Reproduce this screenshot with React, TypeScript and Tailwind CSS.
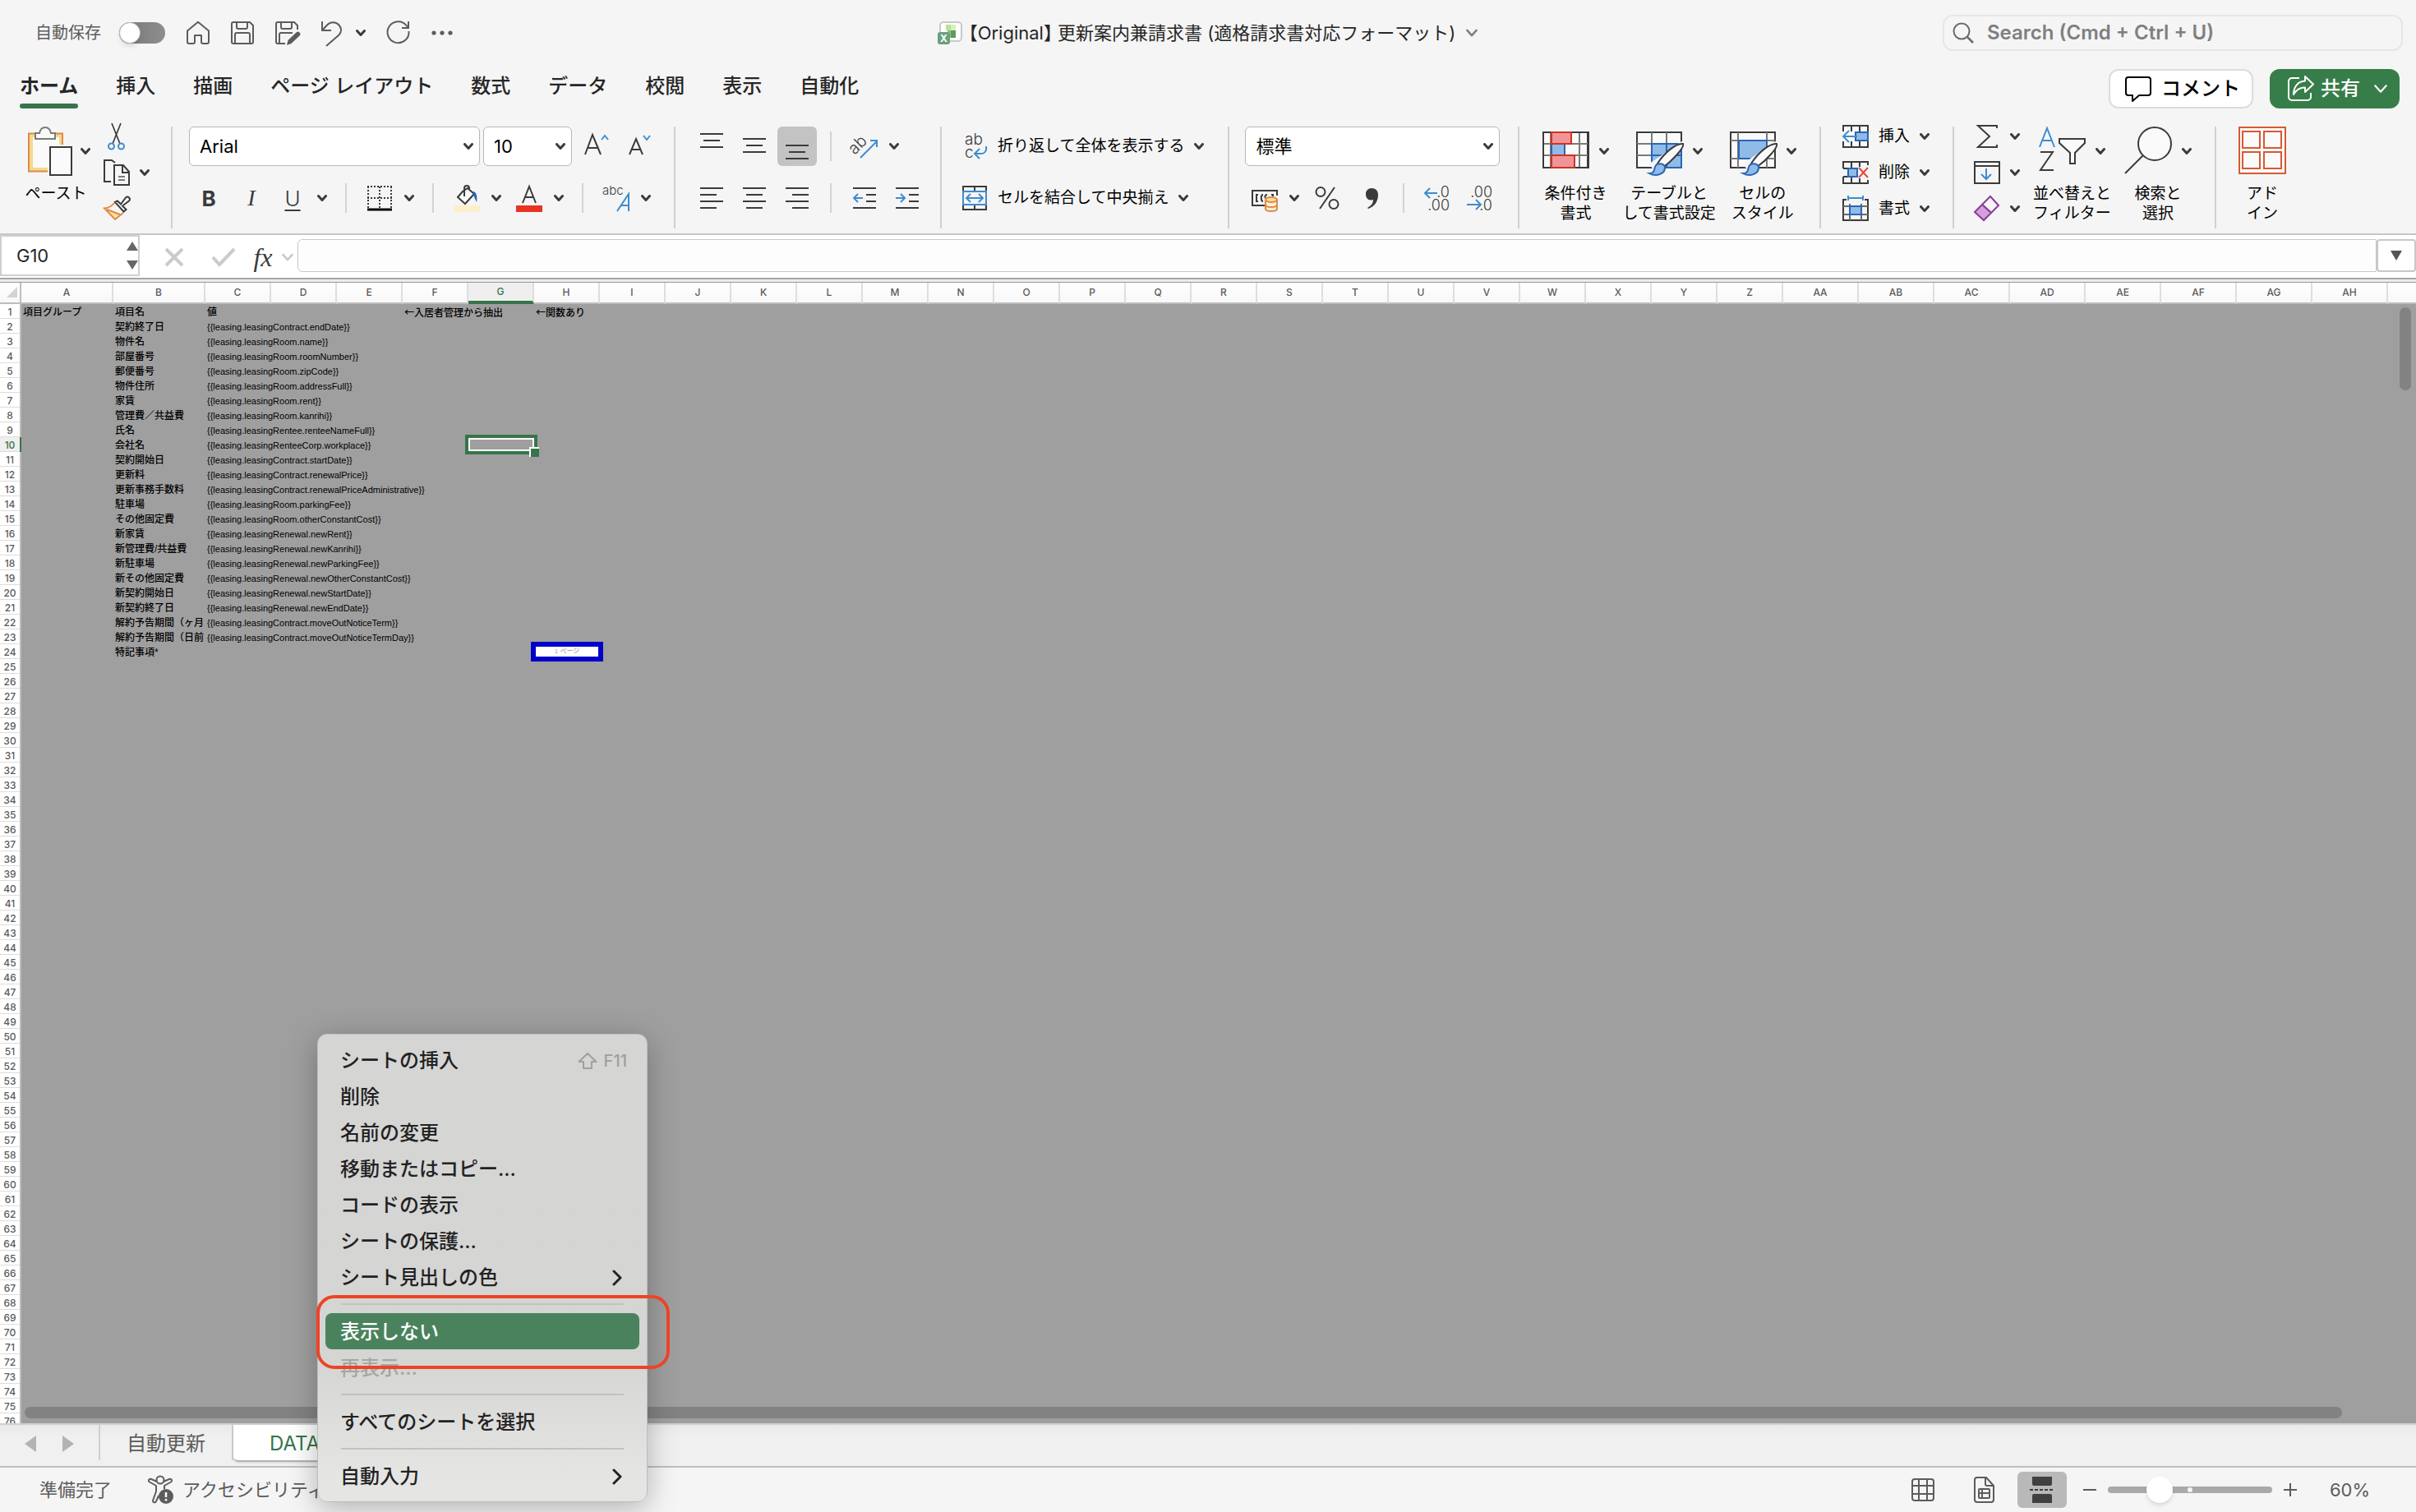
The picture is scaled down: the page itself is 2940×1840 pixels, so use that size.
import type { ReactNode } from "react";

const TABS = ["ホーム", "挿入", "描画", "ページ レイアウト", "数式", "データ", "校閲", "表示", "自動化"];

const COLUMNS = [
  ..."ABCDEFGHIJKLMNOPQRSTUVWXYZ".split(""),
  ..."ABCDEFGH".split("").map((c) => "A" + c),
];

const ROW_COUNT = 76;

// column B / column C, starting on row 1
const DATA: [string, string][] = [
  ["項目名", "値"],
  ["契約終了日", "{{leasing.leasingContract.endDate}}"],
  ["物件名", "{{leasing.leasingRoom.name}}"],
  ["部屋番号", "{{leasing.leasingRoom.roomNumber}}"],
  ["郵便番号", "{{leasing.leasingRoom.zipCode}}"],
  ["物件住所", "{{leasing.leasingRoom.addressFull}}"],
  ["家賃", "{{leasing.leasingRoom.rent}}"],
  ["管理費／共益費", "{{leasing.leasingRoom.kanrihi}}"],
  ["氏名", "{{leasing.leasingRentee.renteeNameFull}}"],
  ["会社名", "{{leasing.leasingRenteeCorp.workplace}}"],
  ["契約開始日", "{{leasing.leasingContract.startDate}}"],
  ["更新料", "{{leasing.leasingContract.renewalPrice}}"],
  ["更新事務手数料", "{{leasing.leasingContract.renewalPriceAdministrative}}"],
  ["駐車場", "{{leasing.leasingRoom.parkingFee}}"],
  ["その他固定費", "{{leasing.leasingRoom.otherConstantCost}}"],
  ["新家賃", "{{leasing.leasingRenewal.newRent}}"],
  ["新管理費/共益費", "{{leasing.leasingRenewal.newKanrihi}}"],
  ["新駐車場", "{{leasing.leasingRenewal.newParkingFee}}"],
  ["新その他固定費", "{{leasing.leasingRenewal.newOtherConstantCost}}"],
  ["新契約開始日", "{{leasing.leasingRenewal.newStartDate}}"],
  ["新契約終了日", "{{leasing.leasingRenewal.newEndDate}}"],
  ["解約予告期間（ヶ月", "{{leasing.leasingContract.moveOutNoticeTerm}}"],
  ["解約予告期間（日前", "{{leasing.leasingContract.moveOutNoticeTermDay}}"],
  ["特記事項*", ""],
];

const DARK = "#3b3b3b";
const BLUE = "#3f8ccf";

function Chevron({ className = "w-3 h-2 text-[#3b3b3b]", width = 3 }: { className?: string; width?: number }) {
  return (
    <svg viewBox="0 0 12 8" className={`shrink-0 ${className}`} fill="none" stroke="currentColor" strokeWidth={width} strokeLinecap="round" strokeLinejoin="round">
      <path d="M1.5 1.5 6 6.5l4.5-5" />
    </svg>
  );
}

function Icon({ children, size = 32, color = DARK, width = 2 }: { children: ReactNode; size?: number; color?: string; width?: number }) {
  return (
    <svg width={size} height={size} viewBox={`0 0 ${size} ${size}`} fill="none" stroke={color} strokeWidth={width} className="shrink-0 overflow-visible">
      {children}
    </svg>
  );
}

// icon with an optional drop-down arrow beside it
function Tool({ label, menu = false, children }: { label: string; menu?: boolean; children: ReactNode }) {
  return (
    <button aria-label={label} className="flex items-center gap-3.5">
      {children}
      {menu && <Chevron />}
    </button>
  );
}

function SmallTool({ label, text, menu = true, children }: { label: string; text?: string; menu?: boolean; children: ReactNode }) {
  return (
    <button aria-label={label} className="flex h-11 items-center gap-3">
      {children}
      {text && <span>{text}</span>}
      {menu && <Chevron />}
    </button>
  );
}

function BigTool({ lines, menu = true, children }: { lines: string[]; menu?: boolean; children: ReactNode }) {
  return (
    <button className="flex flex-col items-center gap-2.5 pt-2.5">
      <span className="flex items-center gap-2.5">
        {children}
        {menu && <Chevron />}
      </span>
      <span className="leading-6">
        {lines.map((line) => (
          <span key={line} className="block">{line}</span>
        ))}
      </span>
    </button>
  );
}

function Divider() {
  return <div className="mt-2.5 h-31 w-0.5 shrink-0 bg-[#d0d0d0]" />;
}

function ThinDivider({ className = "ml-[22px] mr-6" }: { className?: string }) {
  return <div className={`h-9 w-0.5 shrink-0 bg-[#d3d3d3] ${className}`} />;
}

function Combo({ label, value, className }: { label: string; value: string; className: string }) {
  return (
    <div className={`relative h-12 ${className}`}>
      <select aria-label={label} defaultValue={value} className="size-full appearance-none rounded-md border border-[#b8b8b8] bg-white pl-3 text-[22px] text-black">
        <option>{value}</option>
      </select>
      <span className="pointer-events-none absolute inset-y-0 right-2 flex items-center">
        <Chevron />
      </span>
    </div>
  );
}

function AlignButton({ label, d, active = false }: { label: string; d: string; active?: boolean }) {
  return (
    <button aria-label={label} className={`flex size-12 items-center justify-center rounded-md ${active ? "bg-[#c3c3c3]" : ""}`}>
      <Icon><path d={d} /></Icon>
    </button>
  );
}

function TitleBar() {
  return (
    <div className="grid h-20 grid-cols-[1fr_auto_1fr] items-center">
      <div className="flex items-center gap-[26px] pl-[43px] text-[#5c5c5c]">
        <label className="flex items-center gap-[22px] text-xl">
          自動保存
          <input
            type="checkbox"
            role="switch"
            className="h-[26px] w-14 appearance-none rounded-full bg-gradient-to-r from-[#777] to-[#8e8e8e] before:block before:size-[26px] before:rounded-full before:border before:border-[#bbb] before:bg-white before:shadow-md"
          />
        </label>
        <button aria-label="Home">
          <Icon size={28} color="#5c5c5c"><path d="M1 11.500 14 .8 27 11.500V25a2 2 0 0 1-2 2h-5a2 2 0 0 1-2-2v-8h-8v8a2 2 0 0 1-2 2H3a2 2 0 0 1-2-2z" strokeLinejoin="round" /></Icon>
        </button>
        <button aria-label="Save">
          <Icon size={28} color="#5c5c5c"><path d="M3 1h20l4 4v20a2 2 0 0 1-2 2H3a2 2 0 0 1-2-2V3a2 2 0 0 1 2-2zM7 1v6a2 2 0 0 0 2 2h9a2 2 0 0 0 2-2V1M5 27V16a2 2 0 0 1 2-2h14a2 2 0 0 1 2 2v11" /></Icon>
        </button>
        <button aria-label="Save as">
          <Icon size={28} color="#5c5c5c">
            <path d="M12 27H3a2 2 0 0 1-2-2V3a2 2 0 0 1 2-2h20l4 4v5M7 1v6a2 2 0 0 0 2 2h9a2 2 0 0 0 2-2V1M5 27V16a2 2 0 0 1 2-2h14" />
            <path d="m14 29 1.500-6 10-9.500a2.600 2.600 0 0 1 4 4l-10 9.500z" fill="#5c5c5c" stroke="none" />
          </Icon>
        </button>
        <button aria-label="Undo" className="flex items-center gap-4">
          <Icon size={28} color="#5c5c5c"><path d="M3 0v11h11M3 11 9 4.500C13 0 20 .5 23.500 4.500s3 8.500 0 12L8 30" /></Icon>
          <Chevron />
        </button>
        <button aria-label="Redo">
          <Icon size={28} color="#5c5c5c"><path d="M26.500 12A13 13 0 1 1 24 5.500L26 8M26 0v8h-8" /></Icon>
        </button>
        <button aria-label="More">
          <Icon size={28} color="#5c5c5c"><g fill="#5c5c5c" stroke="none"><circle cx="3" cy="14" r="2.600" /><circle cx="13" cy="14" r="2.600" /><circle cx="23" cy="14" r="2.600" /></g></Icon>
        </button>
      </div>

      <button className="flex items-center gap-2 text-[22px] text-[#262626]">
        <svg width="30" height="30" viewBox="0 0 30 30">
          <rect x="3" y="2" width="26" height="23" rx="4" fill="#fdfdfd" stroke="#c9c9c9" strokeWidth="2" />
          <path d="M10 5h6v7h-6z" fill="#b9e29b" />
          <path d="M16 5h6v7h-6z" fill="#d2f2b8" />
          <path d="M16 12h6v9h-6z" fill="#5f9a5c" />
          <path d="M12 12h4v9h-4z" fill="#8cc47c" />
          <rect x="0" y="14" width="15" height="15" rx="3" fill="#6d9f7f" />
          <text x="7.500" y="26" fontSize="12" fontWeight="700" fill="#fff" textAnchor="middle">X</text>
        </svg>
        <span className="[font-feature-settings:'halt']">【Original】 更新案内兼請求書 (適格請求書対応フォーマット)</span>
        <Chevron className="ml-1 h-2.5 w-4 text-[#7d7d7d]" width={2} />
      </button>

      <div className="flex justify-end pr-4">
        <label className="flex h-11 w-[560px] items-center gap-4 rounded-xl border-2 border-[#e6e6e6] px-2.5">
          <Icon size={26} color="#6a6a6a"><circle cx="11" cy="11" r="9.500" /><path d="m18 18 7 7" strokeWidth="2.500" /></Icon>
          <input aria-label="Search" placeholder="Search (Cmd + Ctrl + U)" className="min-w-0 flex-1 bg-transparent text-2xl font-semibold outline-none placeholder:text-[#7f7f7f]" />
        </label>
      </div>
    </div>
  );
}

function TabRow() {
  return (
    <div className="flex h-15 items-start justify-between pl-6 pr-5 pt-1">
      <nav className="flex gap-[46px] text-2xl font-medium text-[#262626]">
        {TABS.map((tab, i) => (
          <button key={tab} className={`flex h-12 flex-col whitespace-nowrap ${i === 0 ? "font-bold" : ""}`}>
            <span className="leading-[42px]">{tab}</span>
            {i === 0 && <span className="h-1.5 w-full rounded-full bg-[#37744a]" />}
          </button>
        ))}
      </nav>
      <div className="flex gap-5 text-2xl font-medium">
        <button className="flex h-12 items-center gap-3 rounded-xl border-2 border-[#dcdcdc] bg-white pl-[18px] pr-3.5 text-black">
          <Icon color="#000"><path d="M4 2h24a3 3 0 0 1 3 3v16a3 3 0 0 1-3 3H17l-8 7v-7H4a3 3 0 0 1-3-3V5a3 3 0 0 1 3-3z" strokeLinejoin="round" /></Icon>
          コメント
        </button>
        <button className="flex h-12 items-center gap-2 rounded-xl bg-[#377d49] pl-[22px] pr-3.5 text-white">
          <Icon color="#fff"><path d="M14 3H5a4 4 0 0 0-4 4v19a4 4 0 0 0 4 4h19a4 4 0 0 0 4-4v-5M21 1l10 9.500L21 20v-5.500c-7 0-11 3-14 8.500 0-9 5-16 14-16.500z" strokeLinejoin="round" /></Icon>
          共有
          <Chevron className="ml-2 h-3 w-[18px]" width={1.4} />
        </button>
      </div>
    </div>
  );
}

function Ribbon() {
  return (
    <div className="flex h-36 items-start pl-[26px] pt-1 text-[19px] text-black">
      <button className="mr-4 flex flex-col gap-2.5 pt-2.5">
        <span className="flex items-center gap-2.5 pl-2">
          <svg width="54" height="60" viewBox="0 0 54 60" fill="none" strokeWidth="2">
            <path d="M3.500 10.500h37v42h-37z" fill="#fafafa" stroke="#f3d98f" strokeWidth="5" />
            <path d="M1 8.500h41v46H1z" stroke="#e08a45" />
            <path d="M9 15V8h5c1-5 3.500-7 7-7s6 2 7 7h5v7z" fill="#fafafa" stroke="#7b7b76" />
            <path d="M24 22h30v38H24z" fill="#f5f5f5" />
            <path d="M27 25h26v34H27z" fill="#fafafa" stroke={DARK} />
          </svg>
          <Chevron />
        </span>
        <span className="leading-6">ペースト</span>
      </button>
      <div className="mr-[26px] flex flex-col">
        <SmallTool label="切り取り" menu={false}>
          <Icon><path d="M10 0 20 25M21 0 11 25" strokeWidth="1.700" /><g stroke={BLUE}><circle cx="9.500" cy="28" r="3.500" /><circle cx="21.500" cy="28" r="3.500" /></g></Icon>
        </SmallTool>
        <SmallTool label="コピー">
          <Icon><path d="M9 27H1V1h9l4 3M13 7h11l7 8v16H13zM23 7v9h8" /><path d="M18 21h8M18 25h8" stroke="#7b7b76" /></Icon>
        </SmallTool>
        <SmallTool label="書式のコピー" menu={false}>
          <Icon><path d="m3 15 18 8-7 6z" fill="#f9e2a4" stroke="none" /><path d="M13 9C10 13 6 15 1 15.500L14 29l10-8M4 17l16 6" stroke="#e08a45" /><path d="m14 8 3-1.500 4 4 6-8a2.800 2.800 0 0 1 4 4l-8 6 4.500 4.500-3 2.500z" fill="#fafafa" /></Icon>
        </SmallTool>
      </div>
      <Divider />

      <div className="ml-5 mr-6 flex flex-col gap-[15px] pt-2.5">
        <div className="flex items-center">
          <Combo label="フォント" value="Arial" className="mr-1 w-[354px]" />
          <Combo label="フォント サイズ" value="10" className="mr-3.5 w-27" />
          <button aria-label="フォント サイズの拡大" className="mr-[22px]">
            <Icon><path d="M2 26 11 2l10 24M5 18h12" /><path d="m22 8 4-5 4 5" stroke={BLUE} /></Icon>
          </button>
          <button aria-label="フォント サイズの縮小">
            <Icon><path d="M2 26 10 7l8 19M5 20h10" /><path d="m19 3 4 5 4-5" stroke={BLUE} /></Icon>
          </button>
        </div>
        <div className="flex h-12 items-center pl-2">
          <button aria-label="太字" className="mr-5 w-8 text-[26px] font-bold text-[#3b3b3b]">B</button>
          <button aria-label="斜体" className="mr-[18px] w-8 font-['Liberation_Serif',serif] text-[28px] italic text-[#3b3b3b]">I</button>
          <button aria-label="下線" className="mr-[22px] flex items-center gap-3.5">
            <span className="w-8 text-[26px] font-light text-[#3b3b3b] underline decoration-2 underline-offset-4">U</span>
            <Chevron />
          </button>
          <ThinDivider className="mr-6" />
          <Tool label="罫線" menu>
            <Icon><path d="M2 2v26M16 2v26M30 2v26M1 2h30M1 16h30" strokeDasharray="2 2" /><path d="M1 30h30" stroke="#000" strokeWidth="3" /></Icon>
          </Tool>
          <ThinDivider />
          <Tool label="塗りつぶしの色" menu>
            <Icon><path d="M0 25h32v8H0z" fill="#fcf0cb" stroke="none" /><path d="M11 8 5 15l9 8 11-12-8-7zM13 14V4a3 3 0 0 1 6 0v2" fill="#fafafa" /><path d="M23 8c5 0 6 6 5 13-2-4-3-6-5-13z" fill="#2b66b5" stroke="none" /></Icon>
          </Tool>
          <span className="w-[18px]" />
          <Tool label="フォントの色" menu>
            <Icon><path d="M0 25h32v8H0z" fill="#e93323" stroke="none" /><path d="M8 22 16 2l8 20M11 15h10" /></Icon>
          </Tool>
          <ThinDivider />
          <Tool label="ふりがな" menu>
            <Icon><text x="-1" y="12" fontSize="15" fontWeight="300" fill={DARK} stroke="none">abc</text><path d="m17 32 14-21v21M22 25h9" stroke={BLUE} /></Icon>
          </Tool>
        </div>
      </div>
      <Divider />

      <div className="ml-5 mr-4 flex flex-col gap-[15px] pt-2.5">
        <div className="flex items-center">
          <div className="flex gap-1">
            <AlignButton label="上揃え" d="M2 1h28M6 9h20M2 17h28" />
            <AlignButton label="上下中央揃え" d="M2 7h28M6 15h20M2 23h28" />
            <AlignButton label="下揃え" d="M2 15h28M6 23h20M2 31h28" active />
          </div>
          <ThinDivider className="ml-4 mr-6" />
          <Tool label="方向" menu>
            <Icon><text x="1" y="24" fontSize="20" fontWeight="300" fill={DARK} stroke="none" transform="rotate(-45 6 22)">ab</text><path d="M11 30 31 10M23 9h8v8" stroke={BLUE} /></Icon>
          </Tool>
        </div>
        <div className="flex items-center">
          <div className="flex gap-1">
            <AlignButton label="左揃え" d="M2 4h28M2 12h20M2 20h28M2 28h20" />
            <AlignButton label="中央揃え" d="M2 4h28M6 12h20M2 20h28M6 28h20" />
            <AlignButton label="右揃え" d="M2 4h28M10 12h20M2 20h28M10 28h20" />
          </div>
          <ThinDivider className="mx-4" />
          <div className="flex gap-1">
            <button aria-label="インデントを減らす" className="flex size-12 items-center justify-center">
              <Icon><path d="M2 4h28M18 12h12M18 20h12M2 28h28" /><path d="M3 16h11M8 11l-5 5 5 5" stroke={BLUE} /></Icon>
            </button>
            <button aria-label="インデントを増やす" className="flex size-12 items-center justify-center">
              <Icon><path d="M2 4h28M18 12h12M18 20h12M2 28h28" /><path d="M2 16h11M8 11l5 5-5 5" stroke={BLUE} /></Icon>
            </button>
          </div>
        </div>
      </div>
      <Divider />

      <div className="ml-6 mr-[29px] flex flex-col gap-[15px] pt-2.5">
        <button className="flex h-12 items-center gap-3 whitespace-nowrap">
          <Icon>
            <text fontSize="19" fontWeight="300" fill={DARK} stroke="none"><tspan x="4" y="14">ab</tspan><tspan x="4" y="30">c</tspan></text>
            <path d="M30 16c1 6-2 9-6 9h-7M22 19l-6 6 6 6" stroke={BLUE} />
          </Icon>
          折り返して全体を表示する
          <Chevron />
        </button>
        <button className="flex h-12 items-center gap-3 whitespace-nowrap">
          <Icon><path d="M2 8V2h28v6M16 2v6M2 24v6h28v-6M16 24v6" /><path d="M2 8h28v16H2zM6 16h20M11 11l-5 5 5 5M21 11l5 5-5 5" stroke={BLUE} /></Icon>
          セルを結合して中央揃え
          <Chevron />
        </button>
      </div>
      <Divider />

      <div className="ml-[19px] mr-[22px] flex flex-col gap-[15px] pt-2.5">
        <Combo label="表示形式" value="標準" className="w-[310px]" />
        <div className="flex h-12 items-center pl-2">
          <Tool label="通貨" menu>
            <Icon><path d="M16 25H1V7h30v6" /><path d="M8 12H6v8h2M14 12c-3 0-3 8 0 8M19 12c-3 0-3 3-2 4M24 12h2v2" /><g stroke="#e08a45" fill="#fbf0dc"><path d="M17 18v11c0 2 3 3 7 3s7-1 7-3V18" /><ellipse cx="24" cy="18" rx="7" ry="3" fill="#f9e2a4" /><path d="M17 24c0 2 3 3 7 3s7-1 7-3" /></g></Icon>
          </Tool>
          <button aria-label="パーセント スタイル" className="ml-[18px] mr-[22px]">
            <Icon><circle cx="8" cy="8.500" r="5.500" /><circle cx="24" cy="23.500" r="5.500" /><path d="M25 3 7 29" /></Icon>
          </button>
          <button aria-label="桁区切りスタイル">
            <Icon><path d="M16 4c5 0 8 3 8 8 0 8-4 14-12 17l-1-1c5-3 7-6 7-10-6 2-9-2-9-7 0-4 3-7 7-7z" fill={DARK} stroke="none" /></Icon>
          </button>
          <ThinDivider />
          <button aria-label="小数点以下の表示桁数を増やす" className="mr-5">
            <Icon><text fontSize="18" fontWeight="300" fill={DARK} stroke="none" textAnchor="end"><tspan x="31" y="15">.0</tspan><tspan x="31" y="31">.00</tspan></text><path d="M1 10h15M7 4l-6 6 6 6" stroke={BLUE} /></Icon>
          </button>
          <button aria-label="小数点以下の表示桁数を減らす">
            <Icon><text fontSize="18" fontWeight="300" fill={DARK} stroke="none" textAnchor="end"><tspan x="31" y="15">.00</tspan><tspan x="31" y="31">.0</tspan></text><path d="M0 24h16M11 18l6 6-6 6" stroke={BLUE} /></Icon>
          </button>
        </div>
      </div>
      <Divider />

      <div className="ml-[27px] mr-7 flex gap-4">
        <BigTool lines={["条件付き", "書式"]}>
          <Icon size={60}>
            <path d="M2 7h54v43H2z" fill="#fafafa" />
            <path d="M11 7v43M46 7v43M2 21h54M2 35h54" stroke="#7b7b76" />
            <path d="M12 21h16v14H12z" fill="#8fbbe8" stroke="#2b66b5" />
            <path d="M2 6v45M1 7h56v43H1" />
            <path d="M12 7h24v14H12zM12 35h28v15H12z" fill="#f19498" stroke="#d0321f" />
          </Icon>
        </BigTool>
        <BigTool lines={["テーブルと", "して書式設定"]}>
          <Icon size={60}>
            <path d="M2 7h54v43H2z" fill="#fafafa" />
            <path d="M20 7v43M38 7v14M2 21h54M2 35h18" stroke="#7b7b76" />
            <path d="M20 21h36v29H20zM38 21v29M20 35h36" fill="#8fbbe8" stroke="#2b66b5" />
            <Brush />
          </Icon>
        </BigTool>
        <BigTool lines={["セルの", "スタイル"]}>
          <Icon size={60}>
            <path d="M2 7h54v43H2z" fill="#fafafa" />
            <path d="M11 7v43M46 7v43M2 17h54M2 39h54" stroke="#7b7b76" />
            <path d="M12 17h34v22H12z" fill="#8fbbe8" stroke="#2b66b5" />
            <Brush />
          </Icon>
        </BigTool>
      </div>
      <Divider />

      <div className="ml-[26px] mr-7 flex flex-col">
        <SmallTool label="挿入" text="挿入">
          <Icon><path d="M1 3h30v26H1zM11 3v26M21 3v26" fill="#fafafa" /><path d="M0 10h16v12H0z" fill="#fafafa" stroke="none" /><path d="M16 11h15v10H16z" fill="#8fbbe8" stroke="#2b66b5" /><path d="M1 16h17M8 9l-7 7 7 7" stroke={BLUE} /></Icon>
        </SmallTool>
        <SmallTool label="削除" text="削除">
          <Icon><path d="M1 11V3h30v4M11 3v8M21 3v6M1 21v8h30v-4M11 29v-8M21 29v-6M1 11h6M1 21h6" /><path d="M7 11h11v10H7z" fill="#8fbbe8" stroke="#2b66b5" /><path d="m20 10 11 12M31 10 20 22" stroke="#e0483c" /></Icon>
        </SmallTool>
        <SmallTool label="書式" text="書式">
          <Icon><path d="M7 0v6M25 0v6M7 3h18" stroke={BLUE} /><path d="M5 5H1v25h30V5h-4" /><path d="M9 10v20M23 10v20M1 13h30M1 23h30" stroke="#6b6b66" /><path d="M9 13h14v10H9z" fill="#8fbbe8" stroke="#2b66b5" /></Icon>
        </SmallTool>
      </div>
      <Divider />

      <div className="ml-6 mr-7 flex gap-4">
        <div className="flex flex-col">
          <SmallTool label="合計"><Icon><path d="M28 6V3H5l14 13L5 29h23v-3" /></Icon></SmallTool>
          <SmallTool label="フィル"><Icon><path d="M1 3h30v26H1zM1 8h30" /><path d="M15 11v13M9 18l6 6 6-6" stroke={BLUE} /></Icon></SmallTool>
          <SmallTool label="クリア"><Icon><path d="m2 20 9-10 10 9-9 11z" fill="#d4a0da" stroke="none" /><path d="M20 1 30 12 12 30 1 20zM10 11l11 10" stroke="#8a3a9c" /></Icon></SmallTool>
        </div>
        <BigTool lines={["並べ替えと", "フィルター"]}>
          <Icon size={60}><path d="M2 25 11 2l9 23M5 17h12" stroke={BLUE} /><path d="M3 31h15L3 53h16" /><path d="M26 15h31v5L45 32v13h-6V32L26 20z" fill="#fafafa" /></Icon>
        </BigTool>
        <BigTool lines={["検索と", "選択"]}>
          <Icon size={60}><circle cx="37" cy="21" r="20" fill="#fafafa" /><path d="M23 35 1 57" /></Icon>
        </BigTool>
      </div>
      <Divider />

      <div className="ml-[26px]">
        <BigTool lines={["アド", "イン"]} menu={false}>
          <Icon size={60} color="#d65a32"><path d="M2 1h56v56H2zM6 6h21v20H6zM32 6h21v20H32zM6 31h21v20H6zM32 31h21v20H32z" fill="#fafafa" /></Icon>
        </BigTool>
      </div>
    </div>
  );
}

function Brush() {
  return (
    <>
      <path d="M58 20 28 54l-8-8z" fill="#f5f5f5" stroke="#f5f5f5" strokeWidth="5" />
      <path d="M27 45C36 31 50 20 58 21c2 4-11 19-25 29z" fill="#fafafa" />
      <path d="M17 57c6 0 6-4 7-8 2-5 10-5 12 0 1 8-10 13-19 8z" fill="#8fbbe8" stroke="#2b66b5" />
    </>
  );
}

function FormulaBar() {
  return (
    <div className="flex h-14 items-start border-y-2 border-t-[#c6c6c6] border-b-[#a6a6a6] bg-white">
      <div className="flex h-[50px] w-[170px] items-center border-2 border-[#cfcfcf] pl-[18px]">
        <input aria-label="名前ボックス" defaultValue="G10" className="min-w-0 flex-1 text-[22px] text-[#262626] outline-none" />
        <svg width="14" height="34" viewBox="0 0 14 34" fill="#666"><path d="M7 0l7 11H0zM7 34l7-11H0z" /></svg>
      </div>
      <div className="flex h-[54px] items-center pl-[30px] pr-1">
        <button aria-label="キャンセル" className="mr-8">
          <svg width="24" height="24" viewBox="0 0 24 24" stroke="#cbcbcb" strokeWidth="4"><path d="m2 2 20 20M22 2 2 22" /></svg>
        </button>
        <button aria-label="入力" className="mr-4">
          <svg width="32" height="24" viewBox="0 0 32 24" fill="none" stroke="#cbcbcb" strokeWidth="4"><path d="m3 12 8 9L29 2" /></svg>
        </button>
        <button aria-label="関数の挿入" className="flex items-center gap-1.5">
          <span className="w-8 font-['Liberation_Serif',serif] text-[32px] italic leading-8 text-[#3b3b3b]">fx</span>
          <Chevron className="h-2.5 w-4 text-[#c9c9c9]" width={2} />
        </button>
      </div>
      <input aria-label="数式バー" className="mt-[5px] h-10 min-w-0 flex-1 rounded-l-md border border-[#c8c8c8] bg-[#fdfdfd] px-2 text-[22px] outline-none" />
      <button aria-label="数式バーの展開" className="mt-[5px] flex h-10 w-12 items-center justify-center rounded-sm border-2 border-[#c8c8c8]">
        <svg width="14" height="12" viewBox="0 0 14 12" fill="#555"><path d="M0 0h14L7 12z" /></svg>
      </button>
    </div>
  );
}

function Cell({ row, col }: { row: number; col: string }) {
  const entry = DATA[row - 1];
  if (row === 1 && col === "A") return <td className="pl-0.5">項目グループ</td>;
  if (row === 1 && col === "F") return <td className="pl-0.5 font-['Noto_Sans_CJK_JP',sans-serif]">←入居者管理から抽出</td>;
  if (row === 1 && col === "H") return <td className="pl-0.5 font-['Noto_Sans_CJK_JP',sans-serif]">←関数あり</td>;
  if (row === 10 && col === "G") {
    return (
      <td className="relative">
        <div className="absolute -inset-x-1 -inset-y-[3px] border-4 border-[#37744a]">
          <div className="size-full border-2 border-white" />
        </div>
        <div className="absolute -bottom-1.5 -right-1.5 size-3 border-l-2 border-t-2 border-white bg-[#37744a]" />
      </td>
    );
  }
  if (row === 24 && col === "H") {
    return (
      <td className="relative">
        <div className="absolute -inset-x-1 -inset-y-[3px] flex items-center justify-center border-6 border-[#0000c8] bg-white text-[8px] leading-none text-[#aaa]">
          1 ページ
        </div>
      </td>
    );
  }
  if (entry && col === "B") return <td className="overflow-hidden pl-0.5">{entry[0]}</td>;
  if (entry && col === "C") return <td className={`pl-0.5 ${row === 1 ? "" : "text-[11px] leading-4"}`}>{entry[1]}</td>;
  return <td />;
}

function Sheet() {
  return (
    <main className="relative min-h-0 flex-1 overflow-hidden bg-[#9f9f9f]">
      <div className="h-1 border-b border-[#999] bg-[#ececec]" />
      <table className="w-full table-fixed border-separate border-spacing-0 text-xs leading-4 text-black">
        <colgroup>
          <col className="w-[26px]" />
          {COLUMNS.map((c) => (
            <col key={c} className={c === "A" || c === "B" ? "w-28" : c.length === 2 ? "w-23" : "w-20"} />
          ))}
          <col />
        </colgroup>
        <thead>
          <tr className="h-[26px] bg-gradient-to-b from-white to-[#f7f7f7] text-[#5a5a5a]">
            <th className="border-b-2 border-r-2 border-[#bdbdbd] p-0">
              <svg width="14" height="14" viewBox="0 0 14 14" className="ml-2"><path d="M13 0v13H0z" fill="#d3d3d3" /></svg>
            </th>
            {COLUMNS.map((c) => (
              <th
                key={c}
                scope="col"
                className={`border-r-2 border-r-[#dedede] p-0 font-medium ${c === "G" ? "border-b-4 border-b-[#37744a] bg-[#efefef] text-[#37744a]" : "border-b-2 border-b-[#bdbdbd]"}`}
              >
                {c}
              </th>
            ))}
            <th className="border-b-2 border-[#bdbdbd]" />
          </tr>
        </thead>
        <tbody className="font-['Liberation_Sans','Noto_Sans_CJK_JP',sans-serif] font-medium whitespace-nowrap">
          {Array.from({ length: ROW_COUNT }, (_, i) => i + 1).map((row) => (
            <tr key={row} className="h-[18px] *:pb-0 *:pt-0.5">
              <th
                scope="row"
                className={`relative h-[18px] border-r-2 px-0 font-['Inter',sans-serif] font-medium shadow-[inset_0_-1px_0_#dcdcdc] ${row === 10 ? "border-r-[#37744a] bg-[#efefef] text-[#37744a]" : "border-r-[#bdbdbd] bg-white text-[#5a5a5a]"}`}
              >
                {row}
              </th>
              {COLUMNS.map((c) => (
                <Cell key={c} row={row} col={c} />
              ))}
              <td />
            </tr>
          ))}
        </tbody>
      </table>
      <div className="absolute right-1.5 top-[34px] h-[101px] w-3.5 rounded-full bg-[#828282]" />
      <div className="absolute bottom-1.5 left-[30px] right-[90px] h-3.5 rounded-full bg-[#828282]" />
    </main>
  );
}

function SheetTabs() {
  return (
    <div className="flex h-13 items-start border-t-2 border-[#cfcfcf] bg-gradient-to-b from-[#e9e9e9] to-[#f0f0f0] to-30% text-2xl leading-[45px] text-[#5c5c5c]">
      <div className="flex h-[45px] items-center gap-8 px-[30px]">
        <button aria-label="前のシート"><svg width="14" height="20" viewBox="0 0 14 20" fill="#b3b3b3"><path d="M14 0v20L0 10z" /></svg></button>
        <button aria-label="次のシート"><svg width="14" height="20" viewBox="0 0 14 20" fill="#b3b3b3"><path d="M0 0v20l14-10z" /></svg></button>
      </div>
      <button className="h-[43px] border-x-2 border-[#cfcfcf] px-8">自動更新</button>
      <button className="h-[45px] rounded-b-md border-b-2 border-[#b3b3b3] bg-white px-11 text-[#37744a] shadow-sm">DATA</button>
    </div>
  );
}

function StatusBar() {
  return (
    <footer className="flex h-14 items-center justify-between border-t-2 border-[#bfbfbf] pl-12 pr-14 text-[22px] text-[#5c5c5c]">
      <div className="flex items-center">
        <span className="mr-11">準備完了</span>
        <button className="flex items-center gap-2.5">
          <svg width="32" height="36" viewBox="0 0 32 36" fill="none" stroke="#5c5c5c" strokeWidth="2">
            <circle cx="15" cy="6" r="4.500" />
            <path d="M11 8 4 5c-3-1-4 2-2 3.500l8 4.500v7L6 31c0 3 3 3 4 1l3-7M19 8l7-3c3-1 4 2 2 3.500L20 13v4" strokeLinejoin="round" />
            <circle cx="22" cy="26" r="9" fill="#5c5c5c" stroke="none" />
            <path d="M22 21v6M22 29v2.500" stroke="#fff" strokeWidth="2.500" />
          </svg>
          アクセシビリティ
        </button>
      </div>
      <div className="flex items-center">
        <button aria-label="標準" className="mr-11">
          <Icon size={30} color="#5c5c5c"><rect x="2" y="2" width="26" height="26" rx="3" /><path d="M10 2v26M20 2v26M2 10h26M2 20h26" /></Icon>
        </button>
        <button aria-label="ページ レイアウト" className="mr-6">
          <Icon color="#5c5c5c"><path d="M7 1h11l9 10v17a3 3 0 0 1-3 3H7a3 3 0 0 1-3-3V4a3 3 0 0 1 3-3zM17 1v8a2 2 0 0 0 2 2h8M10 15h11a1 1 0 0 1 1 1v9a1 1 0 0 1-1 1H10a1 1 0 0 1-1-1v-9a1 1 0 0 1 1-1zM13 15v11M8 20h14" /></Icon>
        </button>
        <button aria-label="改ページ プレビュー" className="flex h-11 w-15 items-center justify-center rounded-md bg-[#b9b9b9]">
          <Icon><path d="M4 0h24v9a2 2 0 0 1-2 2H6a2 2 0 0 1-2-2zM4 32h24v-9a2 2 0 0 0-2-2H6a2 2 0 0 0-2 2z" fill="#404040" stroke="none" /><path d="M1 16h30" strokeDasharray="4 2" /></Icon>
        </button>
        <button aria-label="縮小" className="ml-5 mr-3.5">
          <Icon size={16} color="#5c5c5c"><path d="M0 8h16" /></Icon>
        </button>
        <div className="relative flex w-[200px] items-center">
          <input
            type="range"
            aria-label="ズーム"
            min={0}
            max={100}
            defaultValue={28}
            className="h-2 w-full appearance-none rounded-full bg-[#a9a9a9] [&::-webkit-slider-thumb]:size-8 [&::-webkit-slider-thumb]:appearance-none [&::-webkit-slider-thumb]:rounded-full [&::-webkit-slider-thumb]:bg-white [&::-webkit-slider-thumb]:shadow-md"
          />
          <span className="pointer-events-none absolute left-1/2 size-1.5 -translate-x-1/2 rounded-full bg-[#f4f4f4]" />
        </div>
        <button aria-label="拡大" className="ml-3.5 mr-10">
          <Icon size={16} color="#5c5c5c"><path d="M0 8h16M8 0v16" /></Icon>
        </button>
        <span>60%</span>
      </div>
    </footer>
  );
}

function MenuItem({ label, submenu = false, disabled = false, shortcut }: { label: string; submenu?: boolean; disabled?: boolean; shortcut?: string }) {
  return (
    <button role="menuitem" disabled={disabled} className="flex h-11 w-full items-center justify-between pl-[27px] pr-6 pt-0.5 disabled:text-[#a6a6a4]">
      {label}
      {shortcut && (
        <span className="flex items-center gap-2 text-xl text-[#a0a09e]">
          <Icon size={24} color="#a0a09e"><path d="M12 3 1.500 13H7v8h10v-8h5.500z" strokeLinejoin="round" /></Icon>
          {shortcut}
        </span>
      )}
      {submenu && (
        <svg width="12" height="20" viewBox="0 0 12 20" fill="none" stroke="currentColor" strokeWidth="3" strokeLinecap="round" strokeLinejoin="round" className="mr-1.5">
          <path d="m2 2 8 8-8 8" />
        </svg>
      )}
    </button>
  );
}

function MenuLine() {
  return <div className="mx-7 my-2.5 h-0.5 bg-[#c2c2c0]" />;
}

function SheetMenu() {
  return (
    <div role="menu" className="absolute bottom-3 left-[386px] w-[402px] rounded-xl border border-[#bdbdbb] bg-gradient-to-b from-[#d5d5d4] from-70% to-[#e5e5e4] to-95% py-[9px] text-2xl font-medium text-[#222] shadow-[0_8px_36px_rgba(0,0,0,0.28)]">
      <MenuItem label="シートの挿入" shortcut="F11" />
      <MenuItem label="削除" />
      <MenuItem label="名前の変更" />
      <MenuItem label="移動またはコピー..." />
      <MenuItem label="コードの表示" />
      <MenuItem label="シートの保護..." />
      <MenuItem label="シート見出しの色" submenu />
      <MenuLine />
      <div className="relative px-[9px]">
        <button role="menuitem" className="flex h-11 w-full items-center rounded-lg bg-[#4a825d] pl-[18px] pt-0.5 text-white">
          表示しない
        </button>
        <div className="pointer-events-none absolute -bottom-6 -left-0.5 -right-7 -top-[22px] z-10 rounded-[22px] border-4 border-[#ec4426]" />
      </div>
      <MenuItem label="再表示..." disabled />
      <MenuLine />
      <MenuItem label="すべてのシートを選択" />
      <MenuLine />
      <MenuItem label="自動入力" submenu />
    </div>
  );
}

export default function App() {
  return (
    <div lang="ja" className="relative flex h-screen flex-col overflow-hidden bg-[#f5f5f5] font-['Inter','Noto_Sans_CJK_JP',sans-serif]">
      <header>
        <TitleBar />
        <TabRow />
        <Ribbon />
        <FormulaBar />
      </header>
      <Sheet />
      <SheetTabs />
      <StatusBar />
      <SheetMenu />
    </div>
  );
}
